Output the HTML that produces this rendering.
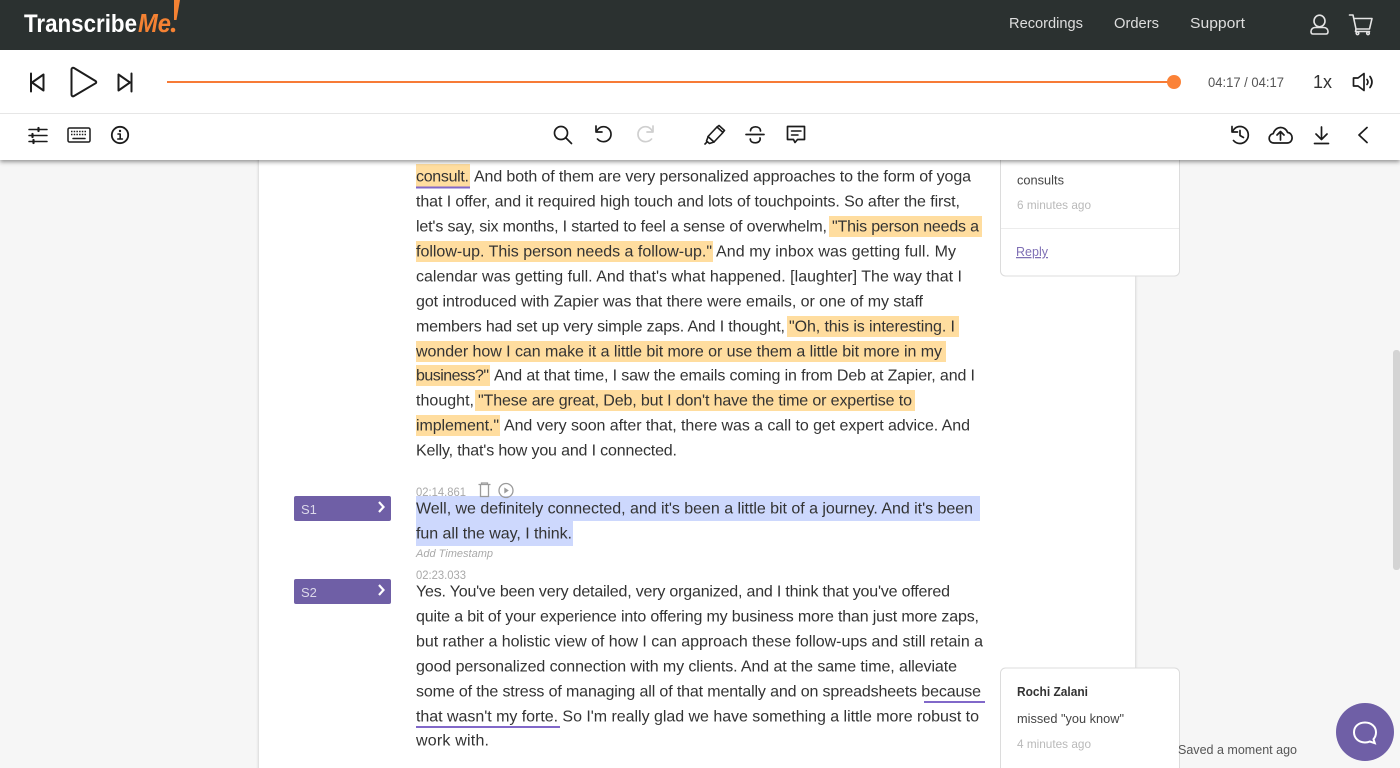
<!DOCTYPE html>
<html><head><meta charset="utf-8"><title>TranscribeMe</title>
<style>
html,body{margin:0;padding:0;width:1400px;height:768px;overflow:hidden;background:#f6f6f6}
svg{display:block}
text{font-family:"Liberation Sans",sans-serif;white-space:pre}
.b text{font-size:16px;fill:#333}
.i{fill:none;stroke:#1c1c1c;stroke-width:1.700;stroke-linecap:round;stroke-linejoin:round}
.n{fill:none;stroke:#e4e4e4;stroke-width:1.600;stroke-linecap:round;stroke-linejoin:round}
</style></head><body>
<svg width="1400" height="768" viewBox="0 0 1400 768" xmlns="http://www.w3.org/2000/svg">
<defs>
<filter id="s" x="-5%" y="-50%" width="110%" height="200%"><feDropShadow dx="0" dy="2" stdDeviation="2" flood-color="#000" flood-opacity=".4"/></filter>
<filter id="p" x="-5%" y="-5%" width="110%" height="110%"><feDropShadow dx="0" dy="0" stdDeviation="1.500" flood-color="#000" flood-opacity=".22"/></filter>
</defs>
<rect width="1400" height="768" fill="#f6f6f6"/>
<rect x="1393" y="350" width="7" height="220" rx="3" fill="#d4d4d4"/>
<rect x="259" y="150" width="876" height="630" fill="#fff" filter="url(#p)"/>

<!-- highlights -->
<g fill="#ffdd9f">
<rect x="416" y="164" width="54" height="23"/>
<rect x="829" y="216" width="153" height="21"/>
<rect x="416" y="241" width="297" height="21"/>
<rect x="787" y="316" width="172" height="21"/>
<rect x="416" y="341" width="530" height="21"/>
<rect x="416" y="365" width="74" height="21"/>
<rect x="475" y="390" width="440" height="21"/>
<rect x="416" y="415" width="84" height="21"/>
</g>
<g fill="#cdd8fd">
<rect x="416" y="496" width="564" height="25"/>
<rect x="416" y="521" width="157" height="25"/>
</g>
<g fill="#8168c9">
<rect x="416" y="186.500" width="54" height="2"/>
<rect x="924" y="701" width="61" height="2"/>
<rect x="416" y="726" width="144" height="2"/>
</g>

<!-- body text -->
<g class="b" transform="translate(0,-0.7)">
<text x="416" y="182" textLength="53" lengthAdjust="spacing">consult.</text>
<text x="474" y="182" textLength="497" lengthAdjust="spacing">And both of them are very personalized approaches to the form of yoga</text>
<text x="416" y="207" textLength="544" lengthAdjust="spacing">that I offer, and it required high touch and lots of touchpoints. So after the first,</text>
<text x="416" y="232" textLength="411" lengthAdjust="spacing">let's say, six months, I started to feel a sense of overwhelm,</text>
<text x="832" y="232" textLength="147" lengthAdjust="spacing">"This person needs a</text>
<text x="416" y="257" textLength="296" lengthAdjust="spacing">follow-up. This person needs a follow-up."</text>
<text x="716" y="257" textLength="240" lengthAdjust="spacing">And my inbox was getting full. My</text>
<text x="416" y="282" textLength="546" lengthAdjust="spacing">calendar was getting full. And that's what happened. [laughter] The way that I</text>
<text x="416" y="307" textLength="507" lengthAdjust="spacing">got introduced with Zapier was that there were emails, or one of my staff</text>
<text x="416" y="332" textLength="369" lengthAdjust="spacing">members had set up very simple zaps. And I thought,</text>
<text x="789" y="332" textLength="166" lengthAdjust="spacing">"Oh, this is interesting. I</text>
<text x="416" y="357" textLength="526" lengthAdjust="spacing">wonder how I can make it a little bit more or use them a little bit more in my</text>
<text x="416" y="381" textLength="73" lengthAdjust="spacing">business?"</text>
<text x="494" y="381" textLength="481" lengthAdjust="spacing">And at that time, I saw the emails coming in from Deb at Zapier, and I</text>
<text x="416" y="406" textLength="58" lengthAdjust="spacing">thought,</text>
<text x="478" y="406" textLength="434" lengthAdjust="spacing">"These are great, Deb, but I don't have the time or expertise to</text>
<text x="416" y="431" textLength="83" lengthAdjust="spacing">implement."</text>
<text x="504" y="431" textLength="466" lengthAdjust="spacing">And very soon after that, there was a call to get expert advice. And</text>
<text x="416" y="456" textLength="261" lengthAdjust="spacing">Kelly, that's how you and I connected.</text>

<text x="416" y="514" textLength="557" lengthAdjust="spacing">Well, we definitely connected, and it's been a little bit of a journey. And it's been</text>
<text x="416" y="539" textLength="156" lengthAdjust="spacing">fun all the way, I think.</text>

<text x="416" y="597" textLength="534" lengthAdjust="spacing">Yes. You've been very detailed, very organized, and I think that you've offered</text>
<text x="416" y="622" textLength="563" lengthAdjust="spacing">quite a bit of your experience into offering my business more than just more zaps,</text>
<text x="416" y="647" textLength="567" lengthAdjust="spacing">but rather a holistic view of how I can approach these follow-ups and still retain a</text>
<text x="416" y="672" textLength="541" lengthAdjust="spacing">good personalized connection with my clients. And at the same time, alleviate</text>
<text x="416" y="697" textLength="565" lengthAdjust="spacing">some of the stress of managing all of that mentally and on spreadsheets because</text>
<text x="416" y="722" textLength="563" lengthAdjust="spacing">that wasn't my forte. So I'm really glad we have something a little more robust to</text>
<text x="416" y="746" textLength="73" lengthAdjust="spacing">work with.</text>
</g>

<!-- timestamps -->
<text x="416" y="496" font-size="11.500" fill="#a9a9a9" textLength="50" lengthAdjust="spacingAndGlyphs">02:14.861</text>
<text x="416" y="557" font-size="11" font-style="italic" fill="#a9a9a9" textLength="77" lengthAdjust="spacingAndGlyphs">Add Timestamp</text>
<text x="416" y="579" font-size="11.500" fill="#a9a9a9" textLength="50" lengthAdjust="spacingAndGlyphs">02:23.033</text>
<g fill="none" stroke="#9b9b9b" stroke-width="1.300">
<path d="M478.500 484.500h12M481.500 484.500v-1.500h6v1.500M480.500 485v11.500h8V485"/>
<circle cx="506" cy="490.500" r="7"/>
<path d="M504.300 487.500l4.500 3-4.500 3z" fill="#9b9b9b" stroke="none"/>
</g>

<!-- speaker tags -->
<rect x="294" y="496" width="97" height="25" rx="2" fill="#6f5fa6"/>
<rect x="294" y="579" width="97" height="25" rx="2" fill="#6f5fa6"/>
<text x="301" y="514" font-size="13" fill="#dcd8ea">S1</text>
<text x="301" y="597" font-size="13" fill="#dcd8ea">S2</text>
<path d="M379 502l4.500 5-4.500 5M379 585l4.500 5-4.500 5" fill="none" stroke="#fff" stroke-width="2.200"/>

<!-- comment cards -->
<rect x="1000.500" y="140" width="179" height="136" rx="5" fill="#fff" stroke="#dcdcdc"/>
<path d="M1001 228.500h178" stroke="#ececec"/>
<text x="1017" y="184.500" font-size="12.500" fill="#444" textLength="47" lengthAdjust="spacingAndGlyphs">consults</text>
<text x="1017" y="209" font-size="12" fill="#b9b9b9" textLength="74" lengthAdjust="spacingAndGlyphs">6 minutes ago</text>
<text x="1016" y="256" font-size="12.500" fill="#7f70b5" text-decoration="underline" textLength="32" lengthAdjust="spacingAndGlyphs">Reply</text>
<rect x="1000.500" y="668" width="179" height="120" rx="5" fill="#fff" stroke="#dcdcdc"/>
<text x="1017" y="696" font-size="12.500" font-weight="700" fill="#333" textLength="71" lengthAdjust="spacingAndGlyphs">Rochi Zalani</text>
<text x="1017" y="723" font-size="12.500" fill="#444" textLength="107" lengthAdjust="spacingAndGlyphs">missed "you know"</text>
<text x="1017" y="748" font-size="12" fill="#b9b9b9" textLength="74" lengthAdjust="spacingAndGlyphs">4 minutes ago</text>
<text x="1178" y="754" font-size="12.500" fill="#555" textLength="119" lengthAdjust="spacingAndGlyphs">Saved a moment ago</text>

<!-- chat button -->
<circle cx="1365" cy="732" r="29" fill="#6f5fa6"/>
<path d="M1365 722.500c6.500 0 11 4.300 11 9.800 0 2.800-1 5.200-2.500 6.900l1.300 4-5-1.700c-1.500.7-3 1-4.800 1-6.500 0-11-4.500-11-10.200s4.500-9.800 11-9.800z" fill="none" stroke="#fff" stroke-width="2"/>

<!-- toolbars -->
<rect x="0" y="50" width="1400" height="110" fill="#fff" filter="url(#s)"/>
<rect x="0" y="113" width="1400" height="1" fill="#e6e6e6"/>

<!-- header -->
<rect width="1400" height="50" fill="#2b3130"/>
<text x="24" y="32" font-size="25" font-weight="700" fill="#fff" textLength="113" lengthAdjust="spacingAndGlyphs">Transcribe</text>
<text x="138" y="32" font-size="26" font-weight="700" font-style="italic" fill="#f58233" textLength="33" lengthAdjust="spacingAndGlyphs">Me</text>
<path d="M174 0h6l-3.500 20h-2.500z" fill="#f58233"/>
<circle cx="173" cy="30" r="2.300" fill="#f58233"/>
<text x="1009" y="28" font-size="15" fill="#dedede" textLength="74" lengthAdjust="spacingAndGlyphs">Recordings</text>
<text x="1114" y="28" font-size="15" fill="#dedede" textLength="45" lengthAdjust="spacingAndGlyphs">Orders</text>
<text x="1190" y="28" font-size="15" fill="#dedede" textLength="55" lengthAdjust="spacingAndGlyphs">Support</text>
<g class="n">
<ellipse cx="1319.500" cy="21" rx="5.500" ry="5.800"/>
<path d="M1311 31.500c0-2.300 1.700-4 4-4h9c2.300 0 4 1.700 4 4 0 1.500-.7 2.500-2 2.500h-13c-1.300 0-2-1-2-2.500z"/>
<path d="M1349.500 15h3.500l3 14h13.500l2.500-10.500h-18"/>
<path d="M1356 29l-.5 2.500h14"/>
<circle cx="1357.500" cy="33.300" r="1.300"/><circle cx="1368" cy="33.300" r="1.300"/>
</g>

<!-- player -->
<g class="i" style="stroke-width:2">
<path d="M31 73.500v18M43.500 74.500v16l-11.500-8z"/>
<path d="M71.500 69.500c0-1.500 1.200-2.200 2.500-1.500l21.500 13c1 .6 1 1.700 0 2.300L74 96c-1.300.8-2.500 0-2.500-1.500z"/>
<path d="M131.500 73.500v18M118.500 74.500v16l11.500-8z"/>
</g>
<rect x="167" y="81" width="1007" height="2" fill="#f77b36"/>
<circle cx="1174" cy="82" r="7" fill="#fb8237"/>
<text x="1208" y="87" font-size="13.500" fill="#555" textLength="76" lengthAdjust="spacingAndGlyphs">04:17 / 04:17</text>
<text x="1313" y="88" font-size="18" fill="#333" textLength="19" lengthAdjust="spacing">1x</text>
<g class="i">
<path d="M1353.500 78h4.500l6-4.500v17l-6-4.500h-4.500z"/>
<path d="M1367 79.500c1.300 1.700 1.300 3.300 0 5M1370 76.500c2.500 3.500 2.500 7.500 0 11"/>
</g>

<!-- toolbar left -->
<g class="i">
<path d="M29 129.500h18M29 135.500h18M29 141.500h18" stroke-width="1.500"/>
<path d="M38.500 128v3M32.500 134v3M33.500 140v3" stroke-width="2.200"/>
<rect x="68" y="128" width="22" height="14" rx="1.500" stroke-width="1.500"/>
<path d="M71 131.500h16M71 134.500h16" stroke-width="1.500" stroke-dasharray="1.500 1.200" stroke-linecap="butt"/>
<path d="M73 138.500h12" stroke-width="1.500"/>
<circle cx="120" cy="135" r="8.200" stroke-width="1.800"/>
<path d="M118 134h2.200v4.500M117.800 139h4.600" stroke-width="1.600"/>
</g>
<circle cx="120" cy="131" r="1.200" fill="#1c1c1c"/>

<!-- toolbar center -->
<g class="i">
<circle cx="561" cy="133" r="6.500"/>
<path d="M566 138l5.500 5.500"/>
<path d="M596 126v6h6"/>
<path d="M596.500 131.500c1.500-3 4-4.800 7-4.800 4.200 0 7.500 3.300 7.500 7.500s-3.300 7.500-7.500 7.500c-2.500 0-4.500-1-6-2.700"/>
<g style="stroke:#cfcfcf">
<path d="M653 126v6h-6"/>
<path d="M652.500 131.500c-1.500-3-4-4.800-7-4.800-4.200 0-7.500 3.300-7.500 7.500s3.300 7.500 7.500 7.500c2.500 0 4.500-1 6-2.700"/>
</g>
<path d="M717 127l6 5.500-9 9.500-6-5.500z" stroke-width="1.600"/>
<path d="M708 137l-1.500 4 3 2.500 4.500-1.500M707 142l-2 2M717 127l2-1.500 5.500 5-1.500 1.500" stroke-width="1.600"/>
<path d="M746 134.500h18"/>
<path d="M760.500 131c0-2.500-2-4.200-5-4.200s-5 1.700-5 4M760 138c.8 2.700-1.500 4.800-4.700 4.800-3 0-5-1.500-5-3.800" stroke-width="1.700"/>
<path d="M787.500 126.500h17v13h-7l-2.500 3-1.500-3h-6z" stroke-width="1.700"/>
<path d="M791.500 131h9.500M791.500 135h6.500" stroke-width="1.500"/>
</g>

<!-- toolbar right -->
<g class="i">
<path d="M1232 126.500v5.500h5.500"/>
<path d="M1232.500 131.500c1.500-3 4-5 7.500-5 4.600 0 8.300 3.800 8.300 8.500s-3.700 8.500-8.300 8.500c-2.700 0-5-1.200-6.500-3"/>
<path d="M1240 130.500v5l3.500 2"/>
<path d="M1274 143c-3 0-4.800-2-4.800-4.700 0-2.500 1.800-4.400 4-4.600 1-3.700 3.900-6.200 7.400-6.200 3.200 0 6 2 7 5 2.600.1 4.500 2.500 4.500 5.300 0 3-2 5.200-5 5.200z"/>
<path d="M1280.500 140v-8M1277 135l3.500-3.500 3.500 3.500"/>
<path d="M1321.500 127v12M1316 134l5.500 5.500 5.500-5.500M1314.500 143.500h14"/>
<path d="M1367 127.500l-8 7.500 8 7.500"/>
</g>
</svg>
</body></html>
